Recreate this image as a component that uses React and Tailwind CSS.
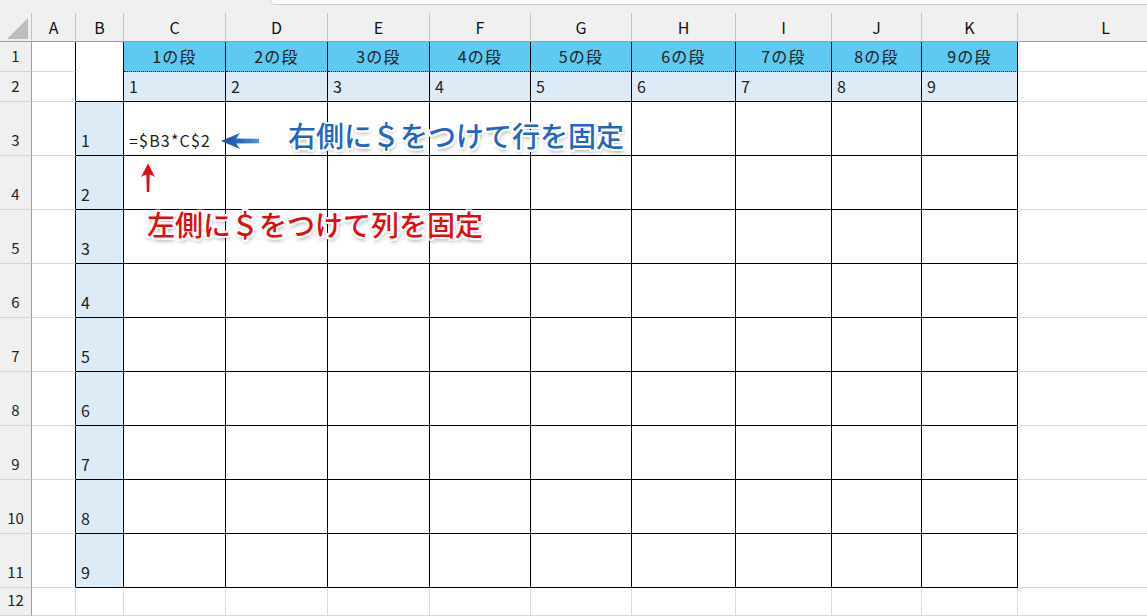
import React from "react";

const cols = ["A", "B", "C", "D", "E", "F", "G", "H", "I", "J", "K", "L"];
const rows = [1, 2, 3, 4, 5, 6, 7, 8, 9, 10, 11, 12];

// gridline + table cell styles
const plain = "border-r border-b border-r-[#dadada] border-b-[#dadada] bg-white";
const leftOfTable = "border-r border-b border-r-black border-b-[#dadada] bg-white";
const dan = "bg-[#5ec9f1] border-r border-r-black [border-bottom:1px_dotted_#222] flex items-end justify-center pb-[3px] text-[16px] tracking-[1.2px] text-[#222]";
const multiplier = "bg-[#ddebf7] border-r border-b border-r-black border-b-black flex items-end pl-[5px] pb-[3px] text-[16px] tracking-[1.2px] text-[#222]";
const body = "bg-white border-r border-b border-r-black border-b-black flex items-end pl-[5px] pb-[3px] text-[16px] tracking-[1.2px] text-[#222]";

function Cell({ r, c }) {
  const ci = cols.indexOf(c);
  if (r >= 12 || c === "L") return <div className={plain} />;
  if (c === "A") return <div className={leftOfTable} />;
  if (c === "B") {
    if (r === 1) return <div className="row-span-2 bg-white border-r border-b border-r-black border-b-black" />;
    if (r === 2) return null;
    return <div className={multiplier}>{r - 2}</div>;
  }
  const n = ci - 1;
  if (r === 1) return <div className={dan}>{n}の段</div>;
  if (r === 2) return <div className={multiplier}>{n}</div>;
  if (r === 3 && c === "C") {
    return <div className={body + " whitespace-nowrap overflow-visible"}>=$B3*C$2</div>;
  }
  return <div className={body} />;
}

function BlueArrow() {
  return (
    <svg className="absolute left-[219px] top-[131px]" width="42" height="20" viewBox="0 0 42 20">
      <defs>
        <linearGradient id="ba" x1="0" y1="0" x2="1" y2="0">
          <stop offset="0" stopColor="#1a50a8" />
          <stop offset="0.55" stopColor="#2b6bc6" />
          <stop offset="1" stopColor="#5b93dc" />
        </linearGradient>
      </defs>
      <path d="M2 10 L21 2 Q18 6 17.5 7.6 L40 7.8 L40 12.2 L17.5 12.4 Q18 14 21 18 Z" fill="url(#ba)" />
    </svg>
  );
}

function RedArrow() {
  return (
    <svg className="absolute left-[140px] top-[162px]" width="16" height="32" viewBox="0 0 16 32">
      <path d="M8 1.5 L15 15 Q11.5 13 9.6 12.6 L9.2 30 L6.8 30 L6.4 12.6 Q4.5 13 1 15 Z" fill="#e30b0b" />
    </svg>
  );
}

export default function App() {
  return (
    <div className="relative w-[1147px] h-[616px] overflow-hidden bg-white font-['Noto_Sans_CJK_JP',sans-serif]">
      {/* formula bar edge */}
      <div className="flex h-[13px] bg-[#f0f0f0]">
        <div className="w-[270px]" />
        <div className="flex-1 h-[5px] bg-white border-l border-b border-[#cfcfcf] rounded-bl-[6px]" />
      </div>

      <div className="grid grid-cols-[32px_44px_48px_102px_102px_102px_101px_101px_104px_96px_90px_96px_176px] grid-rows-[29px_30px_30px_54px_54px_54px_54px_54px_54px_54px_54px_54px_28px]">
        {/* corner */}
        <div className="relative bg-[#f0f0f0] border-r border-b border-r-[#c4c4c4] border-b-[#9e9e9e]">
          <svg className="absolute left-[7px] top-[5px]" width="21" height="21" viewBox="0 0 21 21">
            <path d="M21 0 L21 21 L0 21 Z" fill="#bdbdbd" />
          </svg>
        </div>
        {cols.map((c) => (
          <div
            key={c}
            className="flex items-center justify-center bg-[#f0f0f0] border-r border-b border-r-[#c4c4c4] border-b-[#9e9e9e] text-[16px] text-[#111]"
          >
            {c}
          </div>
        ))}

        {rows.map((r) => (
          <React.Fragment key={r}>
            <div className="flex items-end justify-center pb-[4px] bg-[#f0f0f0] border-r border-b border-r-[#9e9e9e] border-b-[#d4d4d4] text-[15px] text-[#222]">
              {r}
            </div>
            {cols.map((c) => (
              <Cell key={c} r={r} c={c} />
            ))}
          </React.Fragment>
        ))}
      </div>

      {/* annotations */}
      <BlueArrow />
      <RedArrow />
      <div className="absolute left-[288px] top-[119px] text-[28px] leading-[32px] font-medium whitespace-nowrap text-[#1f66c4] [text-shadow:2px_0_0_#fff,-2px_0_0_#fff,0_2px_0_#fff,0_-2px_0_#fff,2px_2px_0_#fff,-2px_-2px_0_#fff,2px_-2px_0_#fff,-2px_2px_0_#fff,1px_3px_4px_rgba(0,0,0,0.45)]">
        右側に＄をつけて行を固定
      </div>
      <div className="absolute left-[147px] top-[208px] text-[28px] leading-[32px] font-medium whitespace-nowrap text-[#e30b0b] [text-shadow:2px_0_0_#fff,-2px_0_0_#fff,0_2px_0_#fff,0_-2px_0_#fff,2px_2px_0_#fff,-2px_-2px_0_#fff,2px_-2px_0_#fff,-2px_2px_0_#fff,1px_3px_4px_rgba(0,0,0,0.45)]">
        左側に＄をつけて列を固定
      </div>
    </div>
  );
}
